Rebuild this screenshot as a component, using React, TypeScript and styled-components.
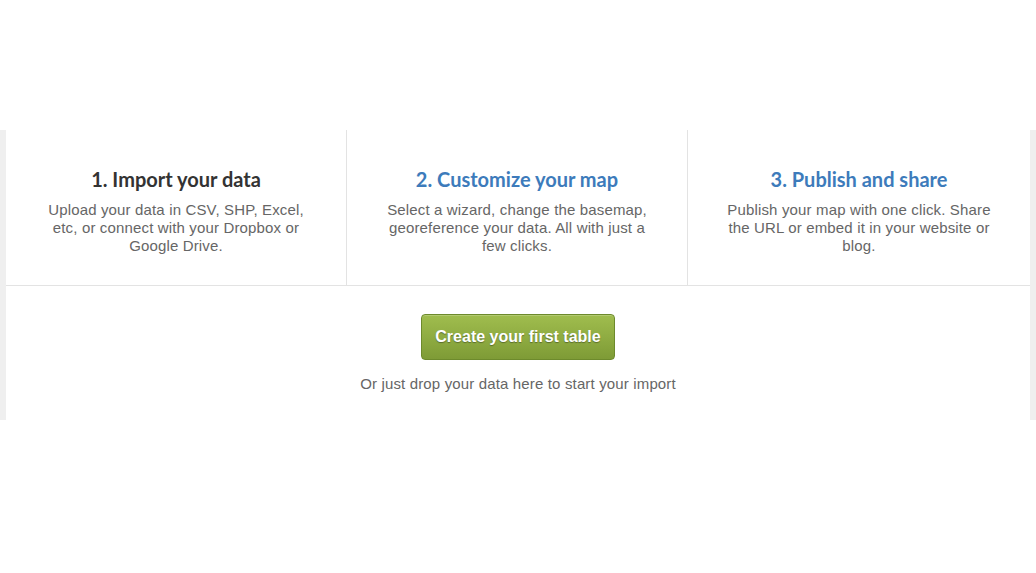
import React from "react";
import styled, { createGlobalStyle } from "styled-components";

const Global = createGlobalStyle`
  html, body { margin: 0; padding: 0; background: #fff; }
  body { font-family: "Liberation Sans", Arial, sans-serif; }
`;

const Page = styled.div`
  padding-top: 130px;
  width: 1036px;
`;

const Frame = styled.div`
  background: #efefef;
  padding: 0 6px;
`;

const Panel = styled.div`
  background: #fff;
  display: flex;
  flex-direction: column;
`;

const Steps = styled.div`
  display: grid;
  grid-template-columns: 341px 341px 342px;
  border-bottom: 1px solid #e3e3e3;
`;

const Step = styled.div<{ $last?: boolean }>`
  padding: 37px 36px 30px;
  height: 155px;
  box-sizing: border-box;
  text-align: center;
  border-right: ${(p) => (p.$last ? "none" : "1px solid #e3e3e3")};
`;

const Title = styled.h3<{ $active?: boolean }>`
  margin: 0 0 10px;
  font-family: "Lato", "Open Sans", sans-serif;
  font-weight: 700;
  font-size: 20px;
  line-height: 24px;
  color: ${(p) => (p.$active ? "#3d7bbb" : "#333")};
`;

const Desc = styled.p`
  margin: 0;
  font-size: 15px;
  letter-spacing: 0.15px;
  line-height: 18px;
  color: #666;
`;

const Bottom = styled.div`
  display: flex;
  flex-direction: column;
  align-items: center;
  padding: 28px 0 27px;
`;

const CreateButton = styled.button`
  width: 194px;
  height: 46px;
  border: 1px solid #6d8a2c;
  border-radius: 4px;
  background: linear-gradient(#a0bd4e, #7e9b36);
  color: #fff;
  font-family: "Liberation Sans", Arial, sans-serif;
  font-size: 16px;
  font-weight: 700;
  text-shadow: 0 1px 1px rgba(0, 0, 0, 0.35);
  box-shadow: inset 0 1px 0 rgba(255, 255, 255, 0.2);
  cursor: pointer;
`;

const Hint = styled.p`
  margin: 15px 0 0;
  font-size: 15px;
  letter-spacing: 0.15px;
  line-height: 18px;
  color: #666;
`;

const steps = [
  {
    title: "1. Import your data",
    desc: "Upload your data in CSV, SHP, Excel, etc, or connect with your Dropbox or Google Drive.",
    active: false,
  },
  {
    title: "2. Customize your map",
    desc: "Select a wizard, change the basemap, georeference your data. All with just a few clicks.",
    active: true,
  },
  {
    title: "3. Publish and share",
    desc: "Publish your map with one click. Share the URL or embed it in your website or blog.",
    active: true,
  },
];

export default function App() {
  return (
    <>
      <Global />
      <Page>
        <Frame>
          <Panel>
            <Steps>
              {steps.map((s, i) => (
                <Step key={s.title} $last={i === steps.length - 1}>
                  <Title $active={s.active}>{s.title}</Title>
                  <Desc>{s.desc}</Desc>
                </Step>
              ))}
            </Steps>
            <Bottom>
              <CreateButton>Create your first table</CreateButton>
              <Hint>Or just drop your data here to start your import</Hint>
            </Bottom>
          </Panel>
        </Frame>
      </Page>
    </>
  );
}
